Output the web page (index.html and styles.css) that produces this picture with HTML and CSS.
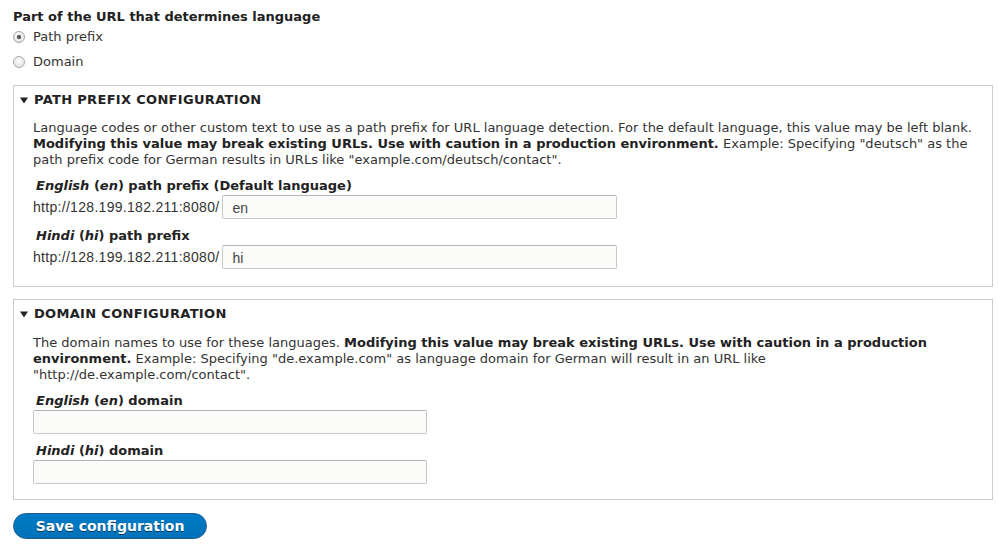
FILE: index.html
```html
<!DOCTYPE html>
<html lang="en">
<head>
<meta charset="utf-8">
<title>Language detection configuration</title>
<link rel="stylesheet" href="styles.css">
</head>
<body>
<form class="page">
  <div class="radios">
    <div class="title">Part of the URL that determines language</div>
    <label class="radio"><input type="radio" name="source" checked><span>Path prefix</span></label>
    <label class="radio"><input type="radio" name="source"><span>Domain</span></label>
  </div>

  <section class="fieldset fs-prefix">
    <div class="legend"><svg class="arrow" width="8" height="7" viewBox="0 0 8 7"><path d="M0 0.5H8L4 6.5Z" fill="#222"/></svg>PATH PREFIX CONFIGURATION</div>
    <p class="desc">Language codes or other custom text to use as a path prefix for URL language detection. For the default language, this value may be left blank. <strong>Modifying this value may break existing URLs. Use with caution in a production environment.</strong> Example: Specifying "deutsch" as the path prefix code for German results in URLs like "example.com/deutsch/contact".</p>
    <div class="field">
      <label class="label"><em>English</em> (<em>en</em>) path prefix (Default language)</label>
      <div class="prefix-row"><span class="prefix">http://128.199.182.211:8080/</span><input class="text" type="text" value="en"></div>
    </div>
    <div class="field">
      <label class="label"><em>Hindi</em> (<em>hi</em>) path prefix</label>
      <div class="prefix-row"><span class="prefix">http://128.199.182.211:8080/</span><input class="text" type="text" value="hi"></div>
    </div>
  </section>

  <section class="fieldset fs-domain">
    <div class="legend"><svg class="arrow" width="8" height="7" viewBox="0 0 8 7"><path d="M0 0.5H8L4 6.5Z" fill="#222"/></svg>DOMAIN CONFIGURATION</div>
    <p class="desc">The domain names to use for these languages. <strong>Modifying this value may break existing URLs. Use with caution in a production environment.</strong> Example: Specifying "de.example.com" as language domain for German will result in an URL like "http://de.example.com/contact".</p>
    <div class="field">
      <label class="label"><em>English</em> (<em>en</em>) domain</label>
      <input class="text" type="text" value="">
    </div>
    <div class="field">
      <label class="label"><em>Hindi</em> (<em>hi</em>) domain</label>
      <input class="text" type="text" value="">
    </div>
  </section>

  <div class="actions"><button type="button" class="button-primary">Save configuration</button></div>
</form>
</body>
</html>
```
FILE: styles.css
```css
html, body {
  margin: 0;
  padding: 0;
  background: #fff;
}
body {
  font-family: "DejaVu Sans", Verdana, sans-serif;
  font-size: 13px;
  line-height: 16px;
  color: #222;
}
.page {
  padding: 9px 6px 0 13px;
  display: flex;
  flex-direction: column;
}
.title {
  font-weight: bold;
  height: 16px;
  margin-bottom: -1px;
}
.radio {
  display: flex;
  align-items: center;
  height: 25px;
  color: #333;
}
.radio input {
  appearance: none;
  -webkit-appearance: none;
  margin: 0 8px 0 0;
  width: 12px;
  height: 12px;
  border-radius: 50%;
  border: 1px solid #a8a8a8;
  background: radial-gradient(circle at 50% 35%, #fdfdfd 0%, #e6e6e6 70%, #d4d4d4 100%);
  position: relative;
  flex: none;
}
.radio input:checked::after {
  content: "";
  position: absolute;
  left: 3px;
  top: 3px;
  width: 4px;
  height: 4px;
  border-radius: 50%;
  background: #555;
  box-shadow: 0 0 1px #777;
}
.fieldset {
  border: 1px solid #ccc;
  margin: 11px 0 0;
  padding: 6px 19px 17px 19px;
  width: 980px;
  box-sizing: border-box;
}
.fs-domain {
  margin-top: 12px;
  padding-bottom: 15px;
}
.fs-domain .desc {
  margin-top: 13px;
}
.legend {
  margin-left: -13px;
  font-weight: bold;
  text-transform: uppercase;
  letter-spacing: 0.32px;
  display: flex;
  align-items: center;
  height: 16px;
}
.arrow {
  margin-right: 6px;
}
.desc {
  margin: 12px 0 10px;
  color: #333;
}
.desc strong {
  color: #222;
}
.field + .field {
  margin-top: 9px;
}
.label {
  display: block;
  font-weight: bold;
  padding-left: 3px;
  margin-bottom: 1px;
}
.prefix-row {
  display: flex;
  align-items: center;
}
.prefix {
  font-family: "Liberation Sans", Arial, sans-serif;
  font-size: 14px;
  color: #333;
  margin-right: 3px;
  letter-spacing: 0.3px;
}
.text {
  display: block;
  box-sizing: border-box;
  width: 395px;
  height: 24px;
  margin: 0;
  padding: 2px 9px 0;
  border: 1px solid #c8c8c8;
  border-top-color: #b4b4b4;
  border-radius: 2px;
  background: #fbfbf9;
  font-family: "Liberation Sans", Arial, sans-serif;
  font-size: 14px;
  color: #444;
}
.fs-domain .text {
  width: 394px;
}
.actions {
  margin-top: 13px;
}
.button-primary {
  width: 194px;
  height: 26px;
  border: 1px solid #1e5c90;
  border-radius: 20em;
  background: linear-gradient(to bottom, #007bc6, #0071b8);
  color: #fff;
  font-family: "DejaVu Sans", Verdana, sans-serif;
  font-size: 14px;
  font-weight: bold;
  text-shadow: 0 1px rgba(0, 0, 0, 0.5);
  padding: 0;
  cursor: pointer;
}
```
